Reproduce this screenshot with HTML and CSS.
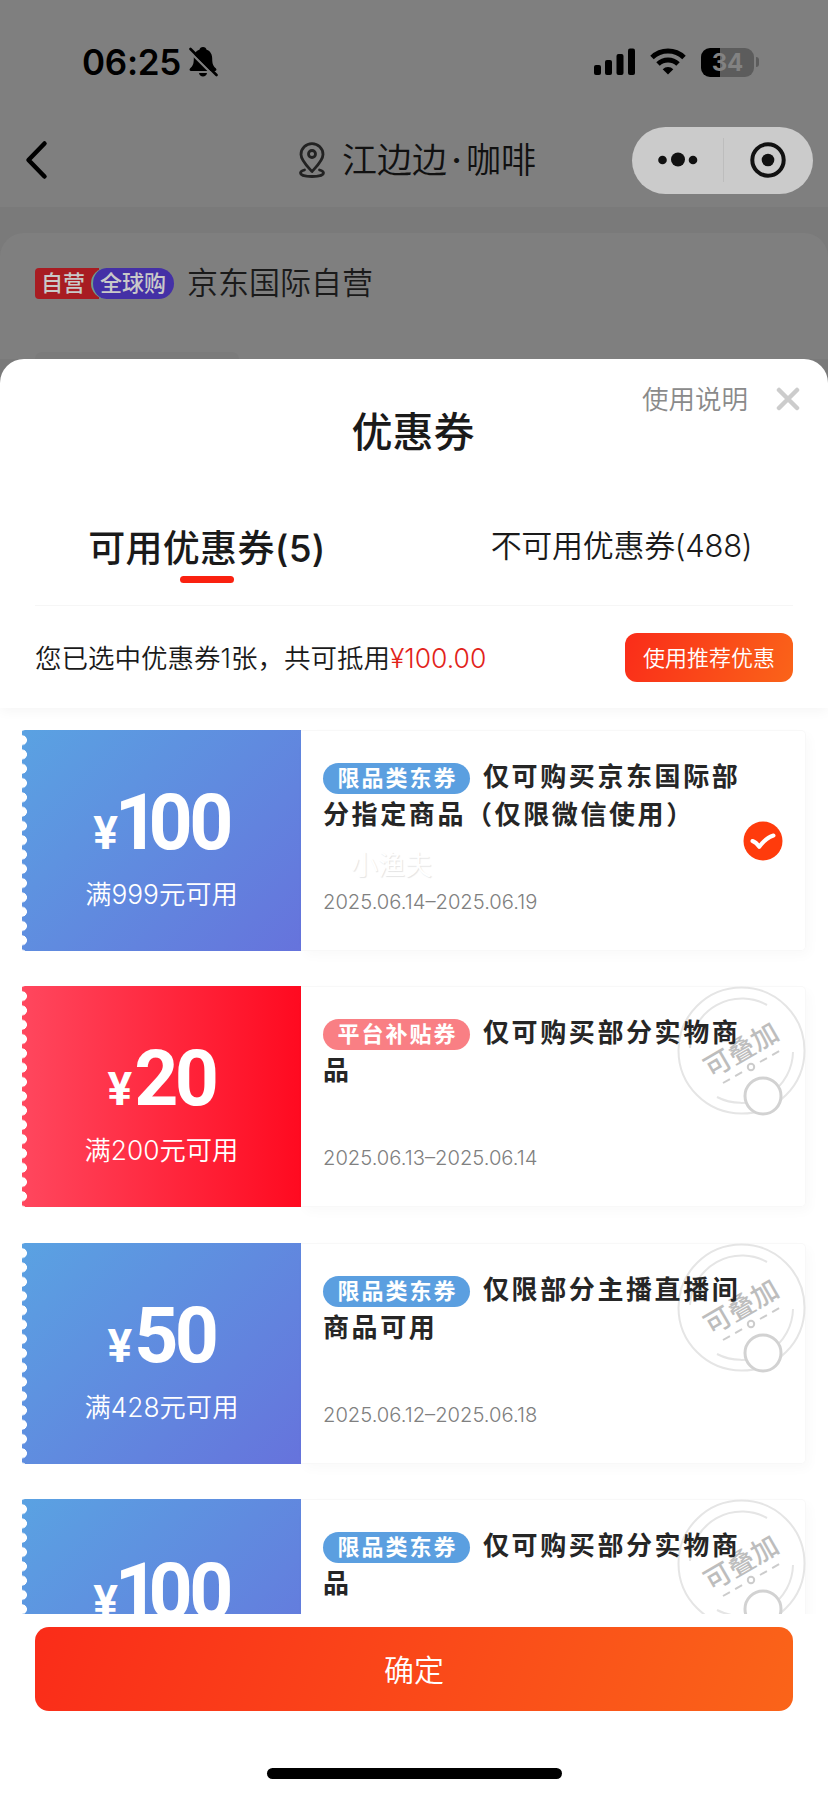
FILE: index.html
```html
<!DOCTYPE html>
<html lang="zh-CN">
<head>
<meta charset="utf-8">
<title>优惠券</title>
<link rel="stylesheet" href="styles.css">
</head>
<body>
<div class="screen">
  <header class="status">
    <span class="time">06:25</span>
    <svg class="bell" width="30" height="34" viewBox="0 0 30 34"><path d="M15 2c-2 0-3.300 1.200-3.600 2.700C7.500 6 5.800 9.500 5.800 13.500c0 6-1.300 7.500-3.600 9.800-1.200 1.200-.8 2.700 1 2.700h23.600c1.800 0 2.200-1.500 1-2.700-2.300-2.300-3.600-3.800-3.600-9.800 0-4-1.700-7.500-5.600-8.800C18.300 3.200 17 2 15 2zM11 28h8c-.3 2.200-1.900 3.500-4 3.500S11.300 30.200 11 28z"/><path class="slash-gap" d="M1 6 27 32"/><path class="slash" d="M2.500 4 28.500 30"/></svg>
    <div class="indicators">
      <svg width="42" height="28" viewBox="0 0 42 28"><rect x="0" y="17" width="7" height="10" rx="2"/><rect x="11" y="12" width="7" height="15" rx="2"/><rect x="22.500" y="6" width="7" height="21" rx="2"/><rect x="34" y="0.500" width="7" height="26.500" rx="2"/></svg>
      <svg class="wifi" width="36" height="28" viewBox="0 0 36 28"><path d="M2 9.500a23 23 0 0 1 32 0M8 16a14.500 14.500 0 0 1 20 0"/><path class="solid" d="M18 26.500l-5.300-5.300a7.500 7.500 0 0 1 10.600 0z"/></svg>
      <div class="battery"><span>34</span></div>
      <div class="battery-cap"></div>
    </div>
  </header>
  <nav class="nav">
    <svg class="back" width="26" height="40" viewBox="0 0 26 40"><path d="M20.500 3.500 4.500 20l16 16.500"/></svg>
    <svg class="pin" width="28" height="36" viewBox="0 0 28 36"><path d="M14 29.500C10 25 3 18.500 3 12.500a11 10.800 0 0 1 22 0c0 6-7 12.500-11 17z"/><circle cx="14" cy="12" r="3.500"/><path d="M6.500 28C4 28.700 2.500 29.700 2.500 31c0 2.200 5 3.500 11.500 3.500S25.500 33.200 25.500 31c0-1.300-1.500-2.300-4-3"/></svg>
    <h1 class="nav-title">江边边<i>·</i>咖啡</h1>
    <div class="capsule">
      <svg width="40" height="16" viewBox="0 0 40 16"><circle cx="4.500" cy="8" r="4.300"/><circle cx="20" cy="7.500" r="7"/><circle cx="35" cy="8" r="4.300"/></svg>
      <b></b>
      <svg width="36" height="36" viewBox="0 0 36 36"><circle class="ring" cx="18" cy="18" r="15.700"/><circle cx="18" cy="18" r="6.300"/></svg>
    </div>
  </nav>
  <section class="shop">
    <div class="shop-row">
      <span class="tag-self">自营</span><span class="tag-global">全球购</span>
      <span class="shop-name">京东国际自营</span>
    </div>
    <div class="shop-item"></div>
  </section>

  <main class="sheet">
    <div class="sheet-head">
      <div class="help"><span>使用说明</span>
        <svg width="24" height="24" viewBox="0 0 24 24"><path d="M3 3l18 18M21 3 3 21"/></svg>
      </div>
      <h2 class="sheet-title">优惠券</h2>
    </div>
    <div class="tabs">
      <div class="tab active">可用优惠券(5)</div>
      <div class="tab other">不可用优惠券(488)</div>
    </div>
    <div class="summary">
      <p>您已选中优惠券1张，共可抵用<em>¥100.00</em></p>
      <button class="recommend">使用推荐优惠</button>
    </div>
    <div class="list">
      <article class="coupon blue">
        <div class="value"><div class="amount"><small>¥</small><span class="one">1</span>00</div><div class="cond">满999元可用</div></div>
        <div class="info">
          <h3><span class="pill">限品类东券</span>仅可购买京东国际部分指定商品（仅限微信使用）</h3>
          <time>2025.06.14–2025.06.19</time>
          <span class="watermark">小渔夫</span>
          <svg class="check" width="40" height="40" viewBox="0 0 40 40"><circle cx="20" cy="20" r="19.500"/><path d="M9.500 20c3 1 4.500 2.500 6.800 5.800C20.500 20 25 16 30.500 14.500"/></svg>
        </div>
      </article>
      <article class="coupon red">
        <div class="value"><div class="amount"><small>¥</small>20</div><div class="cond">满200元可用</div></div>
        <div class="info">
          <h3><span class="pill">平台补贴券</span>仅可购买部分实物商品</h3>
          <time>2025.06.13–2025.06.14</time>
          <svg class="stamp" width="130" height="130" viewBox="0 0 130 130"><use href="#stamp"/></svg>
        </div>
      </article>
      <article class="coupon blue">
        <div class="value"><div class="amount"><small>¥</small>50</div><div class="cond">满428元可用</div></div>
        <div class="info">
          <h3><span class="pill">限品类东券</span>仅限部分主播直播间商品可用</h3>
          <time>2025.06.12–2025.06.18</time>
          <svg class="stamp" width="130" height="130" viewBox="0 0 130 130"><use href="#stamp"/></svg>
        </div>
      </article>
      <article class="coupon blue">
        <div class="value"><div class="amount"><small>¥</small><span class="one">1</span>00</div></div>
        <div class="info">
          <h3><span class="pill">限品类东券</span>仅可购买部分实物商品</h3>
          <svg class="stamp" width="130" height="130" viewBox="0 0 130 130"><use href="#stamp"/></svg>
        </div>
      </article>
    </div>
    <footer class="footer">
      <button class="confirm">确定</button>
      <div class="home"></div>
    </footer>
  </main>
</div>
<svg class="defs" width="0" height="0">
  <symbol id="stamp" viewBox="0 0 130 130">
    <circle class="s-line" cx="64.500" cy="64.500" r="63"/>
    <path class="s-line" d="M13 62A52 52 0 0 1 90 19M116 66A52 52 0 0 1 40 111"/>
    <text class="s-text" transform="translate(66 67) rotate(-30)" x="0" y="6" text-anchor="middle">可叠加</text>
    <path class="s-dash" d="M46 97 66 85.500M83 76 104 64"/>
    <circle class="s-dot" cx="74" cy="81" r="3.200"/>
    <circle class="s-radio" cx="86" cy="110" r="18"/>
  </symbol>
</svg>
</body>
</html>
```
FILE: styles.css
```css
* { box-sizing: border-box; margin: 0; padding: 0; }
body { width: 828px; height: 1796px; overflow: hidden; background: #7a7a7a; font-family: Inter, "Noto Sans CJK SC", sans-serif; font-weight: 350; color: #1a1a1a; }
.screen { height: 1796px; display: flex; flex-direction: column; }
button { border: 0; font: inherit; color: #fff; }
h1, h2, h3 { font-weight: 400; }
.defs { position: absolute; }

.status { height: 113px; flex: none; background: #7f7f7f; display: flex; align-items: center; padding: 11px 69px 0 82px; color: #000; }
.time { font-size: 35px; font-weight: 600; width: 104px; letter-spacing: -0.3px; }
.bell { margin-left: 2px; }
.slash { stroke: #000; stroke-width: 2.600; stroke-linecap: round; }
.slash-gap { stroke: #7f7f7f; stroke-width: 2.400; }
.indicators { margin-left: auto; display: flex; align-items: center; }
.wifi { margin: 0 15px 0 14px; }
.wifi path { fill: none; stroke: #000; stroke-width: 5; }
.wifi .solid { fill: #000; stroke: none; }
.battery { width: 53px; height: 29px; border-radius: 9px; background: linear-gradient(90deg, #000 36%, #5c5c5c 36%); color: #828282; font-size: 24px; font-weight: 700; line-height: 29px; text-align: center; }
.battery-cap { width: 3px; height: 10px; margin-left: 2px; background: #5c5c5c; border-radius: 0 3px 3px 0; }

.nav { height: 94px; flex: none; background: #7f7f7f; display: flex; align-items: center; padding: 0 15px 0 24px; }
.nav path, .pin circle { fill: none; stroke: #000; stroke-linecap: round; stroke-linejoin: round; }
.back path { stroke-width: 4.500; }
.pin { margin-left: 248px; }
.nav .pin path, .nav .pin circle { stroke: #222; stroke-width: 2.800; }
.nav-title { margin-left: 16px; font-size: 35px; line-height: 50px; white-space: nowrap; color: #111; width: 200px; font-weight: 350; }
.nav-title i { font-style: normal; display: inline-block; width: 19px; text-align: center; font-weight: 500; }
.capsule { margin-left: auto; width: 181px; height: 67px; border-radius: 34px; background: #cbcbcb; display: flex; align-items: center; justify-content: space-between; padding: 0 27px 0 26px; }
.capsule b { width: 1px; height: 44px; background: #bdbdbd; margin-left: 13px; margin-right: 14px; }
.capsule circle { fill: #111; }
.capsule .ring { fill: none; stroke: #111; stroke-width: 4; }

.shop { margin-top: 26px; height: 126px; flex: none; background: #7f7f7f; border-radius: 24px 24px 0 0; padding: 35px 35px 0; display: flex; flex-direction: column; justify-content: space-between; }
.shop-row { display: flex; align-items: flex-start; }
.shop-item { width: 204px; height: 7px; border-radius: 12px 12px 0 0; background: #7b7b7b; }
.tag-self, .tag-global { height: 31px; line-height: 30px; font-size: 22px; color: #c9c9c9; font-weight: 500; }
.tag-self { width: 64px; background: #a81c22; border-radius: 4px 0 0 4px; padding-left: 6px; }
.tag-global { width: 83px; margin-left: -8px; background: #4430a6; border-left: 2px solid #6f9c8c; border-radius: 16px; padding-left: 7px; white-space: nowrap; }
.shop-name { margin-left: 13px; font-size: 31px; line-height: 29px; }

.sheet { flex: 1; min-height: 0; background: #fff; border-radius: 24px 24px 0 0; display: flex; flex-direction: column; overflow: hidden; }
.sheet-head { height: 139px; flex: none; display: flex; flex-direction: column; }
.help { height: 38px; margin: 21px 28px 0 0; align-self: flex-end; display: flex; align-items: center; gap: 28px; font-size: 26.500px; color: #8a8a8a; }
.help span { padding-bottom: 4px; }
.help path { stroke: #ccc; stroke-width: 4.500; stroke-linecap: round; }
.sheet-title { text-align: center; font-size: 41px; line-height: 50px; font-weight: 500; margin-top: -11px; padding-right: 2px; }
.tabs { height: 108px; flex: none; margin: 0 35px; border-bottom: 1px solid #f6f6f6; display: flex; }
.tab { text-align: center; white-space: nowrap; font-size: 31px; letter-spacing: -.3px; line-height: 44px; padding-top: 26px; }
.tab.active { position: relative; width: 344px; font-size: 37px; padding-top: 29px; font-weight: 500; letter-spacing: .3px; }
.tab.active::after { content: ""; position: absolute; left: 145px; top: 78px; width: 54px; height: 7px; border-radius: 4px; background: #fa2110; }
.tab.other { flex: none; width: 414px; padding-left: 71px; margin-right: -35px; }
.summary { position: relative; z-index: 1; height: 102px; flex: none; padding: 0 35px; display: flex; justify-content: space-between; align-items: center; background: #fff; box-shadow: 0 3px 12px rgba(0,0,0,.045); clip-path: inset(0 0 -20px 0); }
.summary p { font-size: 26.500px; white-space: nowrap; padding-bottom: 2px; }
.summary em { font-style: normal; color: #e2231a; }
.recommend { width: 168px; height: 49px; border-radius: 12px; font-size: 22px; padding-bottom: 3px; background: linear-gradient(110deg, #fa2c19, #fa6419); }

.list { height: 906px; flex: none; overflow: hidden; padding: 22px 22px 0; display: flex; flex-direction: column; gap: 35.300px; background: #fff; }
.coupon { height: 221px; flex: none; display: flex; }
.value { position: relative; flex: none; width: 279px; color: #fff; text-align: center; padding-top: 54px; }
.value::before { content: ""; position: absolute; left: 0; top: 0; width: 5px; height: 100%; background: radial-gradient(circle at 0 50%, #fff 0 4.600px, transparent 5.200px) 0 3px / 5px 14.300px; }
.blue .value { background: linear-gradient(135deg, #5aa2e2, #6673dc); }
.red .value { background: linear-gradient(90deg, #ff475e, #ff0a20); }
.amount { font-family: Roboto, sans-serif; font-size: 77px; line-height: 78px; font-weight: 700; letter-spacing: -3.500px; }
.amount small { font-size: 46px; letter-spacing: 2px; }
.amount .one { margin: 0 -7px 0 -5px; }
.cond { margin-top: 4px; font-size: 26.300px; line-height: 38px; }
.info { position: relative; flex: 1; min-width: 0; padding: 27px 58px 0 22px; border: 1px solid #f8f8f8; border-left: 0; border-radius: 0 5px 5px 0; box-shadow: 4px 5px 12px rgba(0,0,0,.025); }
.info h3 { position: relative; z-index: 1; height: 114px; font-size: 26px; line-height: 38px; letter-spacing: 2.600px; font-weight: 600; color: #262626; width: 425px; line-break: anywhere; }
.pill { display: inline-block; width: 147px; height: 31px; line-height: 30px; font-size: 22px; letter-spacing: 2px; border-radius: 16px; background: #5b9fe0; color: #fff; text-align: center; margin-right: 13px; padding-left: 2px; font-weight: 600; }
.red .pill { background: #f97f84; }
.info time { display: block; margin-top: 17px; font-size: 20.200px; line-height: 26px; color: #808080; }
.watermark { position: absolute; left: 50px; top: 113px; font-size: 27px; color: #fff; text-shadow: 1px 1px 1px #e4e4e4; }
.check { position: absolute; left: 442px; top: 90px; }
.check circle { fill: #ff3b0c; }
.check path { fill: none; stroke: #fff; stroke-width: 4; stroke-linecap: round; stroke-linejoin: round; }
.stamp { position: absolute; left: 376px; top: -1px; }
.s-line { fill: none; stroke: #e5e5e5; stroke-width: 2; }
.s-text { font-size: 27px; font-weight: 500; fill: #bdbdbd; }
.s-dash { stroke: #ccc; stroke-width: 2; stroke-dasharray: 8 6; }
.s-dot { fill: #fff; stroke: #ccc; stroke-width: 2; }
.s-radio { fill: #fff; stroke: #d2d2d2; stroke-width: 3; }

.footer { flex: 1; background: #fff; padding: 13px 35px 0; display: flex; flex-direction: column; align-items: center; }
.confirm { width: 758px; height: 84px; border-radius: 14px; font-size: 30px; padding-bottom: 3px; background: linear-gradient(110deg, #fa2c19, #fa6419); }
.home { width: 295px; height: 11px; border-radius: 6px; background: #000; margin-top: 57px; }
```
